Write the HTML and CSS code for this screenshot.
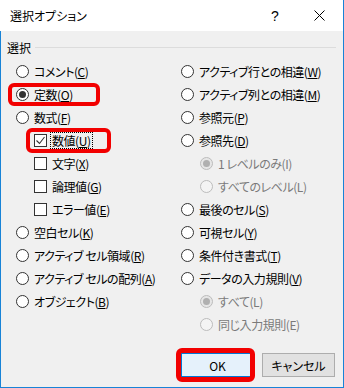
FILE: index.html
```html
<!DOCTYPE html>
<html lang="ja">
<head>
<meta charset="utf-8">
<title>選択オプション</title>
<link rel="stylesheet" href="styles.css">
</head>
<body>
<div class="window">
  <div class="titlebar">
    <span class="title">選択オプション</span>
    <span class="help">?</span>
    <span class="close"><svg width="11" height="11" viewBox="0 0 11 11"><path d="M0.5 0.5 L10.5 10.5 M10.5 0.5 L0.5 10.5" stroke="#000" stroke-width="1" fill="none"/></svg></span>
  </div>
  <div class="body">
    <div class="group-head"><span>選択</span><span class="rule"></span></div>
    <div class="cols">
      <div class="col col-left">
        <div class="item"><span class="radio"></span><span>コメント(<u>C</u>)</span></div>
        <div class="item mark mark-const"><span class="radio on"></span><span>定数(<u>O</u>)</span></div>
        <div class="item"><span class="radio"></span><span>数式(<u>F</u>)</span></div>
        <div class="item sub mark mark-num"><span class="check on"><svg width="11" height="11" viewBox="0 0 11 11"><path d="M1.5 5.5 L4.5 8.5 L9.5 2" stroke="#333" stroke-width="1.1" fill="none"/></svg></span><span class="focus">数値(<u>U</u>)</span></div>
        <div class="item sub"><span class="check"></span><span>文字(<u>X</u>)</span></div>
        <div class="item sub"><span class="check"></span><span>論理値(<u>G</u>)</span></div>
        <div class="item sub"><span class="check"></span><span>エラー値(<u>E</u>)</span></div>
        <div class="item"><span class="radio"></span><span>空白セル(<u>K</u>)</span></div>
        <div class="item"><span class="radio"></span><span>アクティブ セル領域(<u>R</u>)</span></div>
        <div class="item"><span class="radio"></span><span>アクティブ セルの配列(<u>A</u>)</span></div>
        <div class="item"><span class="radio"></span><span>オブジェクト(<u>B</u>)</span></div>
      </div>
      <div class="col col-right">
        <div class="item"><span class="radio"></span><span>アクティブ行との相違(<u>W</u>)</span></div>
        <div class="item"><span class="radio"></span><span>アクティブ列との相違(<u>M</u>)</span></div>
        <div class="item"><span class="radio"></span><span>参照元(<u>P</u>)</span></div>
        <div class="item"><span class="radio"></span><span>参照先(<u>D</u>)</span></div>
        <div class="item sub disabled"><span class="radio on"></span><span>1 レベルのみ(I)</span></div>
        <div class="item sub disabled"><span class="radio"></span><span>すべてのレベル(L)</span></div>
        <div class="item"><span class="radio"></span><span>最後のセル(<u>S</u>)</span></div>
        <div class="item"><span class="radio"></span><span>可視セル(<u>Y</u>)</span></div>
        <div class="item"><span class="radio"></span><span>条件付き書式(<u>T</u>)</span></div>
        <div class="item"><span class="radio"></span><span>データの入力規則(<u>V</u>)</span></div>
        <div class="item sub disabled"><span class="radio on"></span><span>すべて(L)</span></div>
        <div class="item sub disabled"><span class="radio"></span><span>同じ入力規則(E)</span></div>
      </div>
    </div>
    <div class="buttons">
      <button class="btn default mark mark-ok">OK</button>
      <button class="btn">キャンセル</button>
    </div>
  </div>
</div>
</body>
</html>
```

FILE: styles.css
```css
html, body {
  margin: 0;
  padding: 0;
  background: #fff;
}
body {
  font-family: "Noto Sans CJK JP", "Noto Sans", sans-serif;
  font-size: 12px;
  font-feature-settings: "palt";
  color: #000;
}
.window {
  width: 344px;
  height: 388px;
  box-sizing: border-box;
  border-right: 1px solid #1883d7;
  display: flex;
  flex-direction: column;
}
.titlebar {
  height: 31px;
  flex: none;
  display: flex;
  align-items: center;
  padding: 0 18px 0 10px;
  background: #fff;
}
.title {
  flex: 1;
}
.help {
  width: 12px;
  text-align: center;
  font-size: 14px;
  font-family: "Liberation Sans", sans-serif;
  margin-right: 33px;
}
.close {
  display: flex;
  width: 11px;
  height: 11px;
}
.body {
  flex: 1;
  background: #f0f0f0;
  border-left: 1px solid #1883d7;
  border-bottom: 1px solid #1883d7;
  padding: 8px 7px 0 6px;
  display: flex;
  flex-direction: column;
}
.group-head {
  height: 16px;
  display: flex;
  align-items: center;
  gap: 4px;
}
.rule {
  flex: 1;
  height: 1px;
  background: #dcdcdc;
}
.cols {
  display: flex;
  margin-top: 5px;
  padding-left: 9px;
}
.col-left {
  width: 165px;
  flex: none;
}
.col-right {
  flex: 1;
}
.item {
  position: relative;
  height: 23px;
  display: flex;
  align-items: center;
  gap: 5px;
  white-space: nowrap;
  line-height: 23px;
  letter-spacing: -0.45px;
}
.item.sub {
  padding-left: 18px;
}
.col-right .item.sub {
  padding-left: 19px;
}
.radio {
  flex: none;
  width: 13px;
  height: 13px;
  box-sizing: border-box;
  border: 1px solid #333;
  border-radius: 50%;
  background: #fff;
  display: flex;
  align-items: center;
  justify-content: center;
}
.radio.on::after {
  content: "";
  width: 7px;
  height: 7px;
  border-radius: 50%;
  background: #333;
}
.disabled {
  color: #7a7a7a;
}
.disabled .radio {
  border-color: #bcbcbc;
  background: #f4f4f4;
}
.disabled .radio.on {
  background: #e6e6e6;
}
.disabled .radio.on::after {
  background: #b0b0b0;
}
.check {
  flex: none;
  width: 13px;
  height: 13px;
  box-sizing: border-box;
  border: 1px solid #333;
  background: #fff;
  display: flex;
  align-items: center;
  justify-content: center;
}
.focus {
  line-height: 15px;
  border: 1px dotted #000;
  padding: 0 1px;
  margin-left: -2px;
}
u {
  text-underline-offset: 1px;
}
.mark::after {
  content: "";
  position: absolute;
  box-sizing: border-box;
  border: 4px solid #f20000;
  border-radius: 6px;
  pointer-events: none;
}
.mark-const::after {
  left: -8px;
  top: 0;
  width: 92px;
  height: 23px;
}
.mark-num::after {
  left: 10px;
  top: -1px;
  width: 85px;
  height: 25px;
}
.buttons {
  display: flex;
  justify-content: flex-end;
  gap: 8px;
  margin-top: 17px;
  padding-right: 1px;
}
.btn {
  position: relative;
  width: 73px;
  height: 24px;
  box-sizing: border-box;
  border: 1px solid #adadad;
  background: #e1e1e1;
  font-family: "Noto Sans CJK JP", "Noto Sans", sans-serif;
  font-feature-settings: "palt";
  font-size: 12px;
  color: #000;
  padding: 0;
  border-radius: 0;
}
.btn.default {
  border-color: #0078d7;
  background: #e5f1fb;
}
.mark-ok::after {
  left: -6px;
  top: -6px;
  width: 79px;
  height: 34px;
  border-width: 5px;
}
```
